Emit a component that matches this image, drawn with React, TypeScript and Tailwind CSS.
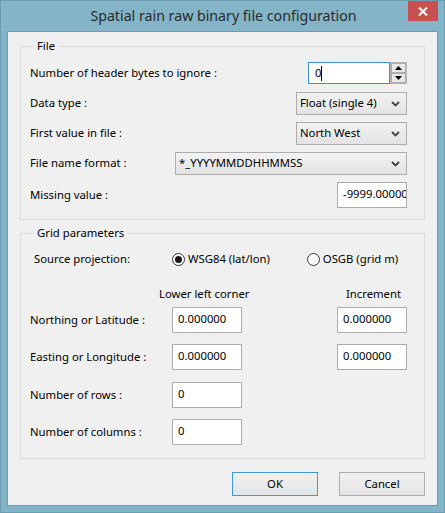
import React from "react";

const font = { fontFamily: '"Noto Sans", "Open Sans", sans-serif' };

function Chevron() {
  return (
    <svg width="9" height="6" viewBox="0 0 9 6" className="shrink-0">
      <path d="M1 1 L4.5 4.5 L8 1" fill="none" stroke="#444" strokeWidth="1.8" />
    </svg>
  );
}

function Combo({ text, w }: { text: string; w: string }) {
  return (
    <div
      className={`${w} h-[23px] border border-[#acacac] bg-gradient-to-b from-[#f2f2f2] to-[#e3e3e3] flex items-center justify-between pl-[3px] pr-[6px] text-[11.3px] text-black`}
    >
      <span className="whitespace-nowrap">{text}</span>
      <Chevron />
    </div>
  );
}

function TextBox({ text, w }: { text: string; w: string }) {
  return (
    <div
      className={`${w} h-[26px] border border-[#abadb3] bg-white pl-[5px] pt-[3px] text-[11.3px] text-black overflow-hidden whitespace-nowrap leading-[16px]`}
    >
      {text}
    </div>
  );
}

function Radio({ checked, label }: { checked: boolean; label: string }) {
  return (
    <div className="flex items-center gap-[3px] text-[11.3px] text-black whitespace-nowrap">
      <div className="w-[13px] h-[13px] shrink-0 rounded-full border border-[#333] bg-white flex items-center justify-center">
        {checked && <div className="w-[7px] h-[7px] rounded-full bg-[#1a1a1a]" />}
      </div>
      <span>{label}</span>
    </div>
  );
}

export default function App() {
  return (
    <div
      className="w-[445px] h-[513px] bg-[#83b4c8] border border-[#6a9db1] flex flex-col px-[6px] pb-[6px] whitespace-nowrap"
      style={font}
    >
      <div className="h-[30px] relative flex items-center justify-center">
        <span className="text-[14.2px] text-[#2b2b2b] ml-[2px]">
          Spatial rain raw binary file configuration
        </span>
        <div className="absolute top-0 right-[0px] w-[30px] h-[20px] bg-[#c75050] flex items-center justify-center">
          <svg width="10" height="9" viewBox="0 0 10 9">
            <path d="M1 0.5 L9 8.5 M9 0.5 L1 8.5" stroke="white" strokeWidth="2" />
          </svg>
        </div>
      </div>
      <div className="flex-1 border border-[#6d9bad] bg-[#f0f0f0] flex flex-col px-[12px] pt-[6px] text-black text-[11.3px]">
        <fieldset className="border border-[#dcdcdc] pl-[9px] pr-[17px] pb-[11px] h-[182px] flex flex-col">
          <legend className="px-[3px] ml-[4px] leading-[16px]">File</legend>
          <div className="flex items-center justify-between h-[22px] mt-[8px]">
            <span>Number of header bytes to ignore :</span>
            <div className="flex h-[22px]">
              <div className="w-[82px] h-[22px] border border-[#3c8fd8] bg-white flex items-center pl-[6px]">
                <span>0</span>
                <span className="w-[1px] h-[15px] bg-black" />
              </div>
              <div className="w-[17px] h-[22px] border border-[#b5b5b5] bg-[#f0f0f0] flex flex-col">
                <div className="flex-1 border border-[#adadad] bg-[#e8e8e8] flex items-center justify-center">
                  <svg width="7" height="4" viewBox="0 0 7 4"><path d="M0 4 L3.5 0 L7 4 Z" fill="#000" /></svg>
                </div>
                <div className="flex-1 border border-[#adadad] bg-[#e8e8e8] flex items-center justify-center">
                  <svg width="7" height="4" viewBox="0 0 7 4"><path d="M0 0 L3.5 4 L7 0 Z" fill="#000" /></svg>
                </div>
              </div>
            </div>
          </div>
          <div className="flex items-center justify-between h-[23px] mt-[8px]">
            <span>Data type :</span>
            <Combo text="Float (single 4)" w="w-[111px]" />
          </div>
          <div className="flex items-center justify-between h-[23px] mt-[7px]">
            <span>First value in file :</span>
            <Combo text="North West" w="w-[111px]" />
          </div>
          <div className="flex items-center justify-between h-[23px] mt-[7px]">
            <span>File name format :</span>
            <Combo text="*_YYYYMMDDHHMMSS" w="w-[232px]" />
          </div>
          <div className="flex items-center justify-between h-[26px] mt-[7px]">
            <span>Missing value :</span>
            <TextBox text="-9999.000000" w="w-[70px]" />
          </div>
        </fieldset>

        <fieldset className="border border-[#dcdcdc] pl-[9px] pr-[17px] h-[234px] mt-[5px] flex flex-col">
          <legend className="px-[3px] ml-[4px] leading-[16px]">Grid parameters</legend>
          <div className="flex items-center h-[20px] mt-[8px]">
            <span className="ml-[4px] w-[138px]">Source projection:</span>
            <Radio checked label="WSG84 (lat/lon)" />
            <div className="ml-[37px]">
              <Radio checked={false} label="OSGB (grid m)" />
            </div>
          </div>
          <div className="flex items-center h-[16px] mt-[17px]">
            <span className="ml-[129px] w-[187px]">Lower left corner</span>
            <span>Increment</span>
          </div>
          <div className="flex items-center h-[26px] mt-[5px]">
            <span className="w-[142px]">Northing or Latitude :</span>
            <TextBox text="0.000000" w="w-[70px]" />
            <div className="ml-auto"><TextBox text="0.000000" w="w-[70px]" /></div>
          </div>
          <div className="flex items-center h-[26px] mt-[11px]">
            <span className="w-[142px]">Easting or Longitude :</span>
            <TextBox text="0.000000" w="w-[70px]" />
            <div className="ml-auto"><TextBox text="0.000000" w="w-[70px]" /></div>
          </div>
          <div className="flex items-center h-[26px] mt-[12px]">
            <span className="w-[142px]">Number of rows :</span>
            <TextBox text="0" w="w-[70px]" />
          </div>
          <div className="flex items-center h-[26px] mt-[11px]">
            <span className="w-[142px]">Number of columns :</span>
            <TextBox text="0" w="w-[70px]" />
          </div>
        </fieldset>

        <div className="flex justify-end gap-[21px] mt-[13px]">
          <div className="w-[86px] h-[24px] border border-[#3c99dc] bg-gradient-to-b from-[#f0f0f0] to-[#e5e5e5] flex items-center justify-center">
            OK
          </div>
          <div className="w-[86px] h-[24px] border border-[#acacac] bg-gradient-to-b from-[#f0f0f0] to-[#e5e5e5] flex items-center justify-center">
            Cancel
          </div>
        </div>
      </div>
    </div>
  );
}
